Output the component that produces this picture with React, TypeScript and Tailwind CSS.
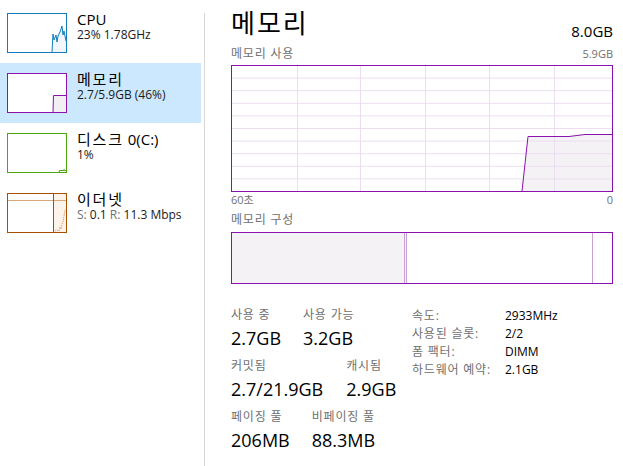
import React from "react";

const PURPLE = "#8b12ae";

function Row({
  selected,
  thumb,
  title,
  sub,
}: {
  selected?: boolean;
  thumb: React.ReactNode;
  title: React.ReactNode;
  sub: React.ReactNode;
}) {
  return (
    <div className={selected ? "flex h-[60px] bg-[#cce8ff] pl-[7px]" : "flex h-[60px] pl-[7px]"}>
      <div className="mt-[10px] h-[40px] w-[60px] shrink-0">{thumb}</div>
      <div className="ml-[10px] mt-[7px]">
        <div className="text-[15px] leading-[18px] text-black">{title}</div>
        <div className="text-[12px] leading-[14px] text-[#1a1a1a]">{sub}</div>
      </div>
    </div>
  );
}

function CpuThumb() {
  return (
    <div className="h-[40px] w-[60px] border border-[#117dbb] bg-white">
      <svg className="block h-full w-full" viewBox="0 0 58 38" preserveAspectRatio="none">
        <polygon
          points="44,38 45,20 46,26 48,21 49,28 50,22 52,18 54,12 55,21 56,17 58,27 58,38"
          fill="#f1f6fa"
        />
        <polyline
          points="44,38 45,20 46,26 48,21 49,28 50,22 52,18 54,12 55,21 56,17 58,27"
          fill="none"
          stroke="#117dbb"
          strokeWidth="1"
        />
      </svg>
    </div>
  );
}

function MemThumb() {
  return (
    <div className="h-[40px] w-[60px] border border-[#8b12ae] bg-white">
      <svg className="block h-full w-full" viewBox="0 0 58 38" preserveAspectRatio="none">
        <polygon points="45,38 45.5,21.5 58,21.5 58,38" fill="#f1eff2" />
        <polyline points="45,38 45.5,21.5 58,21.5" fill="none" stroke={PURPLE} strokeWidth="1" />
      </svg>
    </div>
  );
}

function DiskThumb() {
  return (
    <div className="h-[40px] w-[60px] border border-[#4da60c] bg-white">
      <svg className="block h-full w-full" viewBox="0 0 58 38" preserveAspectRatio="none">
        <polyline
          points="51,38 52,36 53,37 54,36 55,37 56,35.5 57,37 58,36"
          fill="#e6f3dc"
          stroke="#4da60c"
          strokeWidth="1"
        />
      </svg>
    </div>
  );
}

function EthThumb() {
  return (
    <div className="h-[40px] w-[60px] border border-[#a74f01] bg-white">
      <svg className="block h-full w-full" viewBox="0 0 58 38" preserveAspectRatio="none">
        <rect x="45" y="0" width="13" height="38" fill="#fcf3eb" />
        <line x1="0" y1="6.5" x2="58" y2="6.5" stroke="#d9a97d" strokeWidth="1" />
        <line x1="45.5" y1="0" x2="45.5" y2="38" stroke="#a74f01" strokeWidth="1" />
        <polyline
          points="47,37 49,36 51,37 52,33 53,35 54,30 55,28 56,22 57,16 58,15"
          fill="none"
          stroke="#e8875a"
          strokeWidth="1"
          strokeDasharray="1 1"
        />
      </svg>
    </div>
  );
}

function MainGraph() {
  const vx = [65, 128, 193, 257, 322];
  const hy = [11.6, 24.2, 36.8, 49.4, 62, 74.6, 87.2, 99.8, 112.4];
  return (
    <div className="h-[127px] w-full border border-[#8b12ae] bg-white">
      <svg className="block h-full w-full" viewBox="0 0 380 125" preserveAspectRatio="none">
        <polygon points="290,125 296,70 337,70 353,68 380,68 380,125" fill="#f4f2f4" />
        {vx.map((x) => (
          <line key={"v" + x} x1={x + 0.5} y1="0" x2={x + 0.5} y2="125" stroke="#ecdef0" strokeWidth="1" />
        ))}
        {hy.map((y) => (
          <line key={"h" + y} x1="0" y1={y + 0.5} x2="380" y2={y + 0.5} stroke="#ecdef0" strokeWidth="1" />
        ))}
        <polyline points="290,125 296,70.5 337,70.5 353,68.5 380,68.5" fill="none" stroke={PURPLE} strokeWidth="1" />
      </svg>
    </div>
  );
}

function Stat({ label, value }: { label: string; value: string }) {
  return (
    <div className="flex flex-col">
      <div className="text-[12px] leading-[16px] tracking-[0.8px] text-[#707070]">{label}</div>
      <div className="mt-[3px] text-[18px] leading-[24px] text-black">{value}</div>
    </div>
  );
}

export default function App() {
  return (
    <div className="flex h-[466px] w-[623px] overflow-hidden bg-white font-[family-name:'Open_Sans','Noto_Sans_CJK_KR',sans-serif] text-black">
      {/* Sidebar */}
      <div className="w-[201px] shrink-0 pt-[3px]">
        <Row thumb={<CpuThumb />} title="CPU" sub="23% 1.78GHz" />
        <Row
          selected
          thumb={<MemThumb />}
          title={<span className="tracking-[1.8px]">메모리</span>}
          sub="2.7/5.9GB (46%)"
        />
        <Row
          thumb={<DiskThumb />}
          title={
            <span>
              <span className="tracking-[1.8px]">디스크</span> 0(C:)
            </span>
          }
          sub="1%"
        />
        <Row
          thumb={<EthThumb />}
          title={<span className="tracking-[1.8px]">이더넷</span>}
          sub={
            <span>
              <span className="text-[#707070]">S:</span> 0.1 <span className="text-[#707070]">R:</span> 11.3 Mbps
            </span>
          }
        />
      </div>

      {/* Divider */}
      <div className="ml-[3px] mt-[13px] w-px shrink-0 bg-[#d6d6d6]" />

      {/* Main */}
      <div className="flex min-w-0 flex-1 flex-col pl-[26px] pr-[10px]">
        <div className="flex h-[46px] justify-between">
          <div className="mt-[8px] text-[26px] leading-[30px] tracking-[2px] text-black">메모리</div>
          <div className="mt-[21px] text-[15px] leading-[20px] text-black">8.0GB</div>
        </div>
        <div className="flex h-[19px] justify-between text-[11px] leading-[16px] text-[#707070]">
          <span className="text-[12px] tracking-[0.8px]">메모리 사용</span>
          <span>5.9GB</span>
        </div>
        <MainGraph />
        <div className="flex h-[16px] justify-between pt-[1px] text-[11px] leading-[14px] text-[#707070]">
          <span>60초</span>
          <span>0</span>
        </div>
        <div className="mt-[4px] h-[16px] text-[12px] leading-[16px] tracking-[0.8px] text-[#707070]">메모리 구성</div>
        <div className="mt-[4px] flex h-[52px] w-full border border-[#8b12ae] bg-white">
          <div className="w-[172px] bg-[#f4f2f4]" />
          <div className="w-[3px] border-x border-[#c9a3d8] bg-[#f4f2f4]" />
          <div className="flex-1" />
          <div className="w-[20px] border-l border-[#c9a3d8]" />
        </div>

        {/* Stats */}
        <div className="mt-[23px] flex items-start">
          <div className="flex w-[181px] shrink-0 flex-col gap-[8px]">
            <div className="flex gap-[22px]">
              <Stat label="사용 중" value="2.7GB" />
              <Stat label="사용 가능" value="3.2GB" />
            </div>
            <div className="flex gap-[23px]">
              <Stat label="커밋됨" value="2.7/21.9GB" />
              <Stat label="캐시됨" value="2.9GB" />
            </div>
            <div className="flex gap-[22px]">
              <Stat label="페이징 풀" value="206MB" />
              <Stat label="비페이징 풀" value="88.3MB" />
            </div>
          </div>
          <div className="grid grid-cols-[93px_auto] content-start text-[12px] leading-[18px]">
            <span className="tracking-[0.8px] text-[#707070]">속도:</span>
            <span className="text-black">2933MHz</span>
            <span className="tracking-[0.8px] text-[#707070]">사용된 슬롯:</span>
            <span className="text-black">2/2</span>
            <span className="tracking-[0.8px] text-[#707070]">폼 팩터:</span>
            <span className="text-black">DIMM</span>
            <span className="tracking-[0.8px] text-[#707070]">하드웨어 예약:</span>
            <span className="text-black">2.1GB</span>
          </div>
        </div>
      </div>
    </div>
  );
}
